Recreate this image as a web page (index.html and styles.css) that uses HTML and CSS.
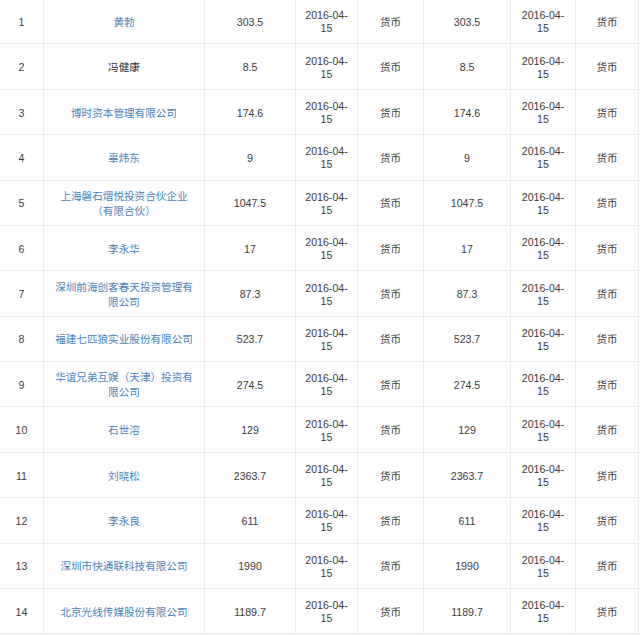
FILE: index.html
```html
<!DOCTYPE html>
<html lang="zh-CN">
<head>
<meta charset="utf-8">
<title>股东出资信息</title>
<link rel="stylesheet" href="styles.css">
</head>
<body>
<table class="holders">
  <colgroup>
    <col class="c-idx"><col class="c-name"><col class="c-amt"><col class="c-date"><col class="c-type">
    <col class="c-amt2"><col class="c-date2"><col class="c-type2">
  </colgroup>
  <tbody>
    <tr><td>1</td><td class="name"><a href="#">黄勃</a></td><td>303.5</td><td class="date">2016-04-<br>15</td><td>货币</td><td>303.5</td><td class="date">2016-04-<br>15</td><td>货币</td></tr>
    <tr><td>2</td><td class="name"><span class="plain">冯健康</span></td><td>8.5</td><td class="date">2016-04-<br>15</td><td>货币</td><td>8.5</td><td class="date">2016-04-<br>15</td><td>货币</td></tr>
    <tr><td>3</td><td class="name"><a href="#">博时资本管理有限公司</a></td><td>174.6</td><td class="date">2016-04-<br>15</td><td>货币</td><td>174.6</td><td class="date">2016-04-<br>15</td><td>货币</td></tr>
    <tr><td>4</td><td class="name"><a href="#">辜炜东</a></td><td>9</td><td class="date">2016-04-<br>15</td><td>货币</td><td>9</td><td class="date">2016-04-<br>15</td><td>货币</td></tr>
    <tr><td>5</td><td class="name"><a href="#">上海磐石熠悦投资合伙企业（有限合伙）</a></td><td>1047.5</td><td class="date">2016-04-<br>15</td><td>货币</td><td>1047.5</td><td class="date">2016-04-<br>15</td><td>货币</td></tr>
    <tr><td>6</td><td class="name"><a href="#">李永华</a></td><td>17</td><td class="date">2016-04-<br>15</td><td>货币</td><td>17</td><td class="date">2016-04-<br>15</td><td>货币</td></tr>
    <tr><td>7</td><td class="name"><a href="#">深圳前海创客春天投资管理有限公司</a></td><td>87.3</td><td class="date">2016-04-<br>15</td><td>货币</td><td>87.3</td><td class="date">2016-04-<br>15</td><td>货币</td></tr>
    <tr><td>8</td><td class="name"><a href="#">福建七匹狼实业股份有限公司</a></td><td>523.7</td><td class="date">2016-04-<br>15</td><td>货币</td><td>523.7</td><td class="date">2016-04-<br>15</td><td>货币</td></tr>
    <tr><td>9</td><td class="name"><a href="#">华谊兄弟互娱（天津）投资有限公司</a></td><td>274.5</td><td class="date">2016-04-<br>15</td><td>货币</td><td>274.5</td><td class="date">2016-04-<br>15</td><td>货币</td></tr>
    <tr><td>10</td><td class="name"><a href="#">石世溶</a></td><td>129</td><td class="date">2016-04-<br>15</td><td>货币</td><td>129</td><td class="date">2016-04-<br>15</td><td>货币</td></tr>
    <tr><td>11</td><td class="name"><a href="#">刘晓松</a></td><td>2363.7</td><td class="date">2016-04-<br>15</td><td>货币</td><td>2363.7</td><td class="date">2016-04-<br>15</td><td>货币</td></tr>
    <tr><td>12</td><td class="name"><a href="#">李永良</a></td><td>611</td><td class="date">2016-04-<br>15</td><td>货币</td><td>611</td><td class="date">2016-04-<br>15</td><td>货币</td></tr>
    <tr><td>13</td><td class="name"><a href="#">深圳市快通联科技有限公司</a></td><td>1990</td><td class="date">2016-04-<br>15</td><td>货币</td><td>1990</td><td class="date">2016-04-<br>15</td><td>货币</td></tr>
    <tr><td>14</td><td class="name"><a href="#">北京光线传媒股份有限公司</a></td><td>1189.7</td><td class="date">2016-04-<br>15</td><td>货币</td><td>1189.7</td><td class="date">2016-04-<br>15</td><td>货币</td></tr>
  </tbody>
</table>
</body>
</html>
```
FILE: styles.css
```css
html, body {
  margin: 0;
  padding: 0;
  background: #ffffff;
}

body {
  font-family: "Liberation Sans", "Noto Sans CJK SC", sans-serif;
  font-size: 10.6px;
  color: #3c3c3c;
  overflow: hidden;
}

.holders {
  border-collapse: collapse;
  table-layout: fixed;
  width: 639px;
  margin: -1.9px 0 0 -1px;
}

.c-idx { width: 44px; }
.c-name { width: 161px; }
.c-amt { width: 91px; }
.c-date { width: 62px; }
.c-type { width: 66px; }
.c-amt2 { width: 87px; }
.c-date2 { width: 65px; }
.c-type2 { width: 63px; }

.holders tr {
  height: 45.38px;
}

.holders td {
  border: 1px solid #ececec;
  padding: 2px 6px 0;
  text-align: center;
  vertical-align: middle;
  line-height: 15px;
  word-break: break-all;
}

.holders td.name {
  padding: 2px 9px 0;
}

.holders td.date {
  line-height: 13px;
}

.holders a {
  color: #4684bc;
  text-decoration: none;
}

.plain {
  color: #2f2f2f;
}
```
